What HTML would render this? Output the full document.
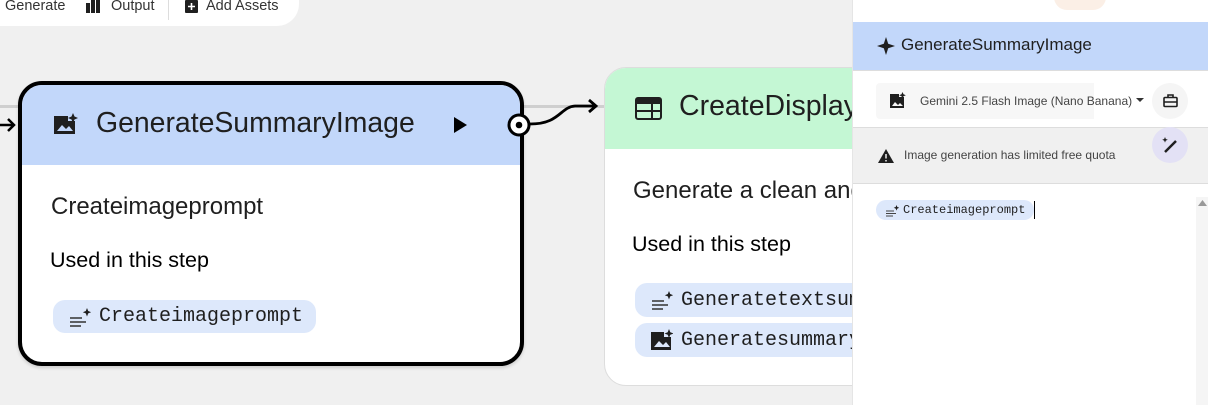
<!DOCTYPE html>
<html><head><meta charset="utf-8"><style>
*{box-sizing:border-box;margin:0;padding:0}
body{width:1208px;height:405px;overflow:hidden;background:#f0f0f0;font-family:"Liberation Sans",sans-serif;position:relative;color:#1f1f1f}
.abs{position:absolute;white-space:nowrap}
.chip{position:absolute;background:#dde8fb;border-radius:12px;display:flex;align-items:center;font-family:"Liberation Mono",monospace;color:#1f1f1f;white-space:nowrap;overflow:hidden}
.chip svg{flex-shrink:0}
</style></head><body>
<!-- toolbar -->
<div class="abs" style="left:-20px;top:-20px;width:319px;height:46px;background:#fff;border-radius:0 0 22px 0"></div>
<div class="abs" style="left:5px;top:-2px;font-size:14.5px;color:#333">Generate</div>
<svg class="abs" style="left:86px;top:0" width="14" height="13"><rect x="0" y="3" width="4" height="10" fill="#1f1f1f"/><rect x="5" y="0" width="4" height="13" fill="#1f1f1f"/><rect x="10" y="-2" width="4" height="15" fill="#1f1f1f"/></svg>
<div class="abs" style="left:111px;top:-2px;font-size:14.5px;color:#333">Output</div>
<div class="abs" style="left:168px;top:0;width:1px;height:20px;background:#ddd"></div>
<svg class="abs" style="left:185px;top:0" width="13" height="13"><rect width="13" height="13" rx="1" fill="#1f1f1f"/><path d="M6.5 3v7M3 6.5h7" stroke="#fff" stroke-width="1.6"/></svg>
<div class="abs" style="left:206px;top:-2px;font-size:14.5px;color:#333">Add Assets</div>
<!-- connectors -->
<div class="abs" style="left:0;top:105px;width:610px;height:3px;background:#cfcfcf"></div>
<svg class="abs" style="left:0;top:80px" width="620" height="70">
<path d="M0 45H14M8 39l6 6-6 6" stroke="#000" stroke-width="2.5" fill="none"/>
<path d="M530 44C560 44 560 27 575 26H596M589 20l7 6-7 6" stroke="#000" stroke-width="2.8" fill="none"/>
</svg>
<!-- node1 -->
<div class="abs" style="left:18px;top:81px;width:506px;height:285px;border:4px solid #000;border-radius:24px;background:#fff;overflow:hidden;box-shadow:0 2px 3px rgba(0,0,0,.15)">
<div style="height:80px;background:#c2d7fa"></div>
</div>
<svg class="abs" style="left:54px;top:113px" width="24" height="24"><path d="M0 3h14v5h7v13H0z" fill="#1f1f1f"/><path d="M3 18l5-6 4 4 3-3 4 5z" fill="#c2d7fa"/><path d="M19 0l1.5 3.5L24 5l-3.5 1.5L19 10l-1.5-3.5L14 5l3.5-1.5z" fill="#1f1f1f"/></svg>
<div class="abs" style="left:96px;top:107px;font-size:28.4px">GenerateSummaryImage</div>
<svg class="abs" style="left:453px;top:117px" width="14" height="16"><path d="M1 0l13 8-13 8z" fill="#000"/></svg>
<svg class="abs" style="left:506px;top:112px" width="26" height="26"><circle cx="13" cy="13" r="10" fill="#fff" stroke="#000" stroke-width="3"/><circle cx="13" cy="13" r="3.3" fill="#000"/></svg>
<div class="abs" style="left:51px;top:193px;font-size:24px">Createimageprompt</div>
<div class="abs" style="left:50px;top:248px;font-size:21.5px;color:#000">Used in this step</div>
<div class="chip" style="left:53px;top:300px;width:263px;height:33px;font-size:20px;padding-left:16px">
<svg width="22" height="20" style="margin-right:8px"><path d="M1 11h12M1 15h16M1 19h11" stroke="#333" stroke-width="1.5"/><path d="M18 1l1.2 3 3 1.2-3 1.2L18 9.5l-1.2-3.1-3-1.2 3-1.2z" fill="#1f1f1f"/></svg>Createimageprompt</div>
<!-- node2 -->
<div class="abs" style="left:604px;top:67px;width:300px;height:319px;border:1px solid #ddd;border-radius:22px;background:#fff;overflow:hidden">
<div style="height:81px;background:#c4f7d4"></div>
</div>
<svg class="abs" style="left:635px;top:97px" width="27" height="23"><rect x="1" y="1" width="25" height="21" rx="2" fill="none" stroke="#1f1f1f" stroke-width="2"/><rect x="1" y="1" width="25" height="6" fill="#1f1f1f"/><path d="M1 14h25M17 7v15" stroke="#1f1f1f" stroke-width="2"/></svg>
<div class="abs" style="left:679px;top:90px;font-size:28.5px">CreateDisplay</div>
<div class="abs" style="left:633px;top:177px;font-size:24px">Generate a clean and</div>
<div class="abs" style="left:632px;top:232px;font-size:21.5px;color:#000">Used in this step</div>
<div class="chip" style="left:635px;top:283px;width:260px;height:34px;font-size:20px;padding-left:16px"><svg width="22" height="20" style="margin-right:8px"><path d="M1 11h12M1 15h16M1 19h11" stroke="#333" stroke-width="1.5"/><path d="M18 1l1.2 3 3 1.2-3 1.2L18 9.5l-1.2-3.1-3-1.2 3-1.2z" fill="#1f1f1f"/></svg>Generatetextsummary</div>
<div class="chip" style="left:635px;top:323px;width:260px;height:34px;font-size:20px;padding-left:16px"><svg width="22" height="22" style="margin-right:8px"><path d="M0 3h13v5h7v13H0z" fill="#1f1f1f"/><path d="M3 18l5-6 4 4 3-3 4 5z" fill="#dde8fb"/><path d="M18 0l1.3 3.2 3.2 1.3-3.2 1.3L18 9l-1.3-3.2-3.2-1.3 3.2-1.3z" fill="#1f1f1f"/></svg>Generatesummaryimage</div>
<!-- right panel -->
<div class="abs" style="left:852px;top:0;width:356px;height:405px;background:#fff;border-left:1px solid #e5e5e5"></div>
<div class="abs" style="left:1054px;top:-16px;width:52px;height:26px;background:#fbefe6;border-radius:13px"></div>
<div class="abs" style="left:853px;top:22px;width:355px;height:48px;background:#c2d7fa"></div>
<svg class="abs" style="left:877px;top:37px" width="18" height="18"><path d="M9 0l2.2 6.8L18 9l-6.8 2.2L9 18l-2.2-6.8L0 9l6.8-2.2z" fill="#1f1f1f"/></svg>
<div class="abs" style="left:901px;top:35px;font-size:17px">GenerateSummaryImage</div>
<div class="abs" style="left:853px;top:70px;width:355px;height:1px;background:#ddd"></div>
<div class="abs" style="left:876px;top:83px;width:218px;height:36px;background:#f7f7f7;border-radius:4px 0 0 4px"></div>
<svg class="abs" style="left:890px;top:92px" width="16" height="16"><path d="M0 2h9v3h5v11H0z" fill="#1f1f1f"/><path d="M2 14l3-4 3 3 2-2 3 3z" fill="#f7f7f7"/><path d="M12.5 0l1 2.3 2.3 1-2.3 1-1 2.3-1-2.3-2.3-1 2.3-1z" fill="#1f1f1f"/></svg>
<div class="abs" style="left:920px;top:94px;font-size:12px;color:#444">Gemini 2.5 Flash Image (Nano Banana)</div>
<svg class="abs" style="left:1136px;top:98px" width="8" height="5"><path d="M0 0h8L4 4z" fill="#333"/></svg>
<div class="abs" style="left:1152px;top:83px;width:36px;height:36px;border-radius:50%;background:#f5f5f5"></div>
<svg class="abs" style="left:1163px;top:94px" width="15" height="14"><rect x="1" y="3.5" width="13" height="9" rx="1" fill="none" stroke="#1f1f1f" stroke-width="1.6"/><path d="M5 3.5V1h5v2.5M1 8h13" stroke="#1f1f1f" stroke-width="1.6" fill="none"/></svg>
<div class="abs" style="left:853px;top:127px;width:355px;height:57px;background:#f0f0f0;border-top:1px solid #ddd;border-bottom:1px solid #ddd"></div>
<div class="abs" style="left:1152px;top:127px;width:36px;height:36px;border-radius:50%;background:#e3e1f5"></div>
<svg class="abs" style="left:1161px;top:136px" width="18" height="18"><path d="M4 16L15 5" stroke="#1f1f1f" stroke-width="2.5"/><path d="M4 1l.8 2 2 .8-2 .8L4 6.6l-.8-2-2-.8 2-.8z" fill="#1f1f1f"/></svg>
<svg class="abs" style="left:878px;top:149px" width="16" height="14"><path d="M8 0l8 14H0z" fill="#1f1f1f"/><path d="M8 5v4.5M8 11v1.5" stroke="#f0f0f0" stroke-width="1.5"/></svg>
<div class="abs" style="left:904px;top:148px;font-size:12px;color:#444">Image generation has limited free quota</div>
<div class="chip" style="left:876px;top:200px;width:158px;height:20px;border-radius:10px;font-size:12px;padding-left:9px"><svg width="14" height="13" style="margin-right:4px"><path d="M1 7h8M1 9.5h10M1 12h7" stroke="#444" stroke-width="1"/><path d="M11.5 1l.8 2 2 .8-2 .8-.8 2-.8-2-2-.8 2-.8z" fill="#1f1f1f"/></svg>Createimageprompt</div>
<div class="abs" style="left:1034px;top:201px;width:1px;height:18px;background:#000"></div>
<div class="abs" style="left:1196px;top:197px;width:12px;height:208px;background:#f5f5f5"></div>
<svg class="abs" style="left:1198px;top:200px" width="9" height="7"><path d="M0 6L4.5 0 9 6z" fill="#999"/></svg>
</body></html>
